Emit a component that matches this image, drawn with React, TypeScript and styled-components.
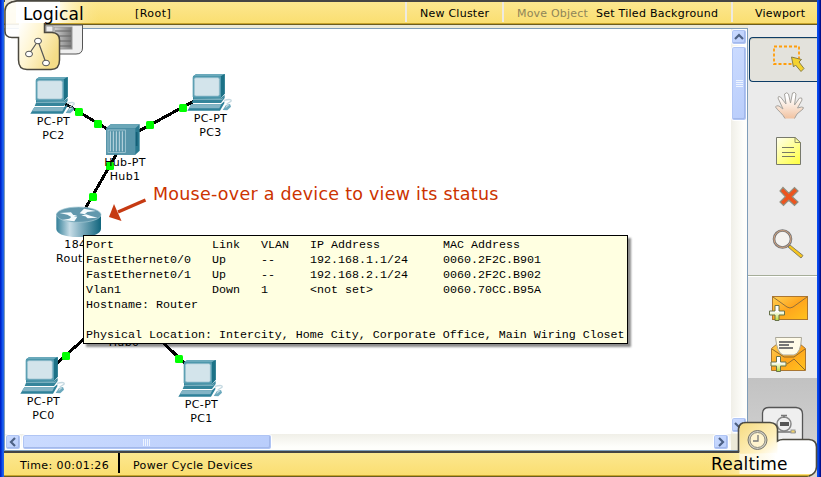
import React from 'react';
import styled, { createGlobalStyle } from 'styled-components';

const GlobalStyle = createGlobalStyle`
  * { box-sizing: border-box; }
  body { margin: 0; overflow: hidden; font-family: "DejaVu Sans", sans-serif; font-size: 11px; color: #000; }
  svg { display: block; }
`;

const Window = styled.div`
  position: relative;
  width: 821px;
  height: 477px;
  display: flex;
  flex-direction: column;
  padding: 0 4px;
  background: linear-gradient(90deg, #0022c8 0, #0022c8 1px, #0a4ff0 2px, #2a66e0 4px, #ece9d8 4px, #ece9d8 817px, #0a4ff0 817px, #0038e0 819px, #00108c 820px);
`;

const Bar = styled.div<{ $bottom?: boolean }>`
  display: flex;
  flex: none;
  align-items: stretch;
  height: ${p => (p.$bottom ? 26 : 25)}px;
  border-top: 2px solid #444;
  border-bottom: 1px solid #6b5d22;
  background: linear-gradient(#fce78f, #fade70);
  box-shadow: inset 0 -1px 0 #c8a42c;
  line-height: ${p => (p.$bottom ? 25 : 23)}px;
  white-space: nowrap;
`;

const BarCell = styled.div<{ $width: number; $pad: number; $dark?: boolean; $last?: boolean }>`
  display: flex;
  width: ${p => p.$width}px;
  height: 20px;
  flex: none;
  padding-left: ${p => p.$pad}px;
  border-right: ${p => (p.$last ? '0' : p.$dark ? '2px solid #000' : '2px solid #eeeae0')};
`;

const BarText = styled.span<{ $width?: number; $muted?: boolean; $spacing?: number }>`
  width: ${p => (p.$width ? `${p.$width}px` : 'auto')};
  color: ${p => (p.$muted ? '#8f8558' : '#000')};
  letter-spacing: ${p => p.$spacing ?? 0}px;
`;

const Middle = styled.div`
  display: flex;
  flex: none;
  height: 426px;
`;

const Workspace = styled.div`
  display: grid;
  grid-template-columns: 726px 16px;
  grid-template-rows: 405px 16px;
  width: 744px;
  flex: none;
  border: 1px solid #7f9db9;
  border-top: 0;
  margin-top: 3px;
  box-shadow: inset 0 1px 0 #7f9db9;
  padding-top: 1px;
`;

const Canvas = styled.div`
  position: relative;
  overflow: hidden;
  background: #fff;
`;

const Links = styled.svg`
  position: absolute;
  left: 0;
  top: 0;
`;

const Node = styled.div<{ $x: number; $y: number; $width: number }>`
  position: absolute;
  left: ${p => p.$x - 5}px;
  top: ${p => p.$y - 29}px;
  width: ${p => p.$width}px;
  display: flex;
  flex-direction: column;
  align-items: center;
`;

const NodeLabel = styled.span`
  font-size: 11px;
  line-height: 14px;
  letter-spacing: 0.35px;
  white-space: nowrap;

  svg + & {
    margin-top: 1px;
  }
`;

const Callout = styled.div`
  position: absolute;
  left: 148px;
  top: 153px;
  color: #cc3300;
  font-size: 17.5px;
  letter-spacing: 0.24px;
  line-height: 24px;
  white-space: nowrap;
`;

const Tooltip = styled.div`
  position: absolute;
  left: 78px;
  top: 206px;
  width: 545px;
  height: 109px;
  padding: 2px 0 0 2px;
  border: 1px solid #000;
  background: #ffffe1;
  box-shadow: 3px 3px 2px rgba(0, 0, 0, 0.45);
  font-family: "Liberation Mono", monospace;
  font-size: 11.667px;
  line-height: 15px;
  white-space: pre;
`;

const StatusRow = styled.div`
  display: grid;
  grid-template-columns: 126px 49px 49px 133px 1fr;
  height: 15px;
`;

const StatusLine = styled.div`
  height: 15px;
`;

const Track = styled.div<{ $vertical?: boolean }>`
  display: flex;
  flex-direction: ${p => (p.$vertical ? 'column' : 'row')};
  background: linear-gradient(${p => (p.$vertical ? '90deg' : '180deg')}, #f0efe8, #fefefb 80%);
`;

const ScrollPiece = styled.div<{ $w: number; $h: number }>`
  display: flex;
  flex: none;
  align-items: center;
  justify-content: center;
  width: ${p => p.$w}px;
  height: ${p => p.$h}px;
  border: 1px solid #fff;
  border-radius: 3px;
  background: linear-gradient(135deg, #cbdbff, #b9cdfb);
  box-shadow: inset 0 0 0 1px #b0c5f4, inset -1px -1px 0 1px #a3b8ea;
`;

const Gap = styled.div<{ $size: number }>`
  flex: 0 0 ${p => p.$size}px;
`;

const Corner = styled.div`
  background: #ece9d8;
`;

const Side = styled.div`
  width: 69px;
  background: #ebebeb;
  display: flex;
  flex-direction: column;
  padding-top: 12px;
`;

const ToolButton = styled.div<{ $height: number; $active?: boolean }>`
  flex: none;
  height: ${p => p.$height}px;
  padding-left: ${p => (p.$active ? 16 : 18)}px;
  margin-left: ${p => (p.$active ? 1 : 0)}px;
  ${p => p.$active && `
    border: 1px solid #0d3c66;
    border-right: 0;
    border-radius: 4px 0 0 4px;
    background: #e3e2dc;
    box-shadow: inset 0 1px 0 #c5c5bc;
  `}
`;

const ToolGroup = styled.div`
  height: 103px;
  flex: none;
  border-top: 1px solid #a5ad99;
  box-shadow: inset 0 1px 0 #fff;
  padding-top: 10px;
`;

const SideFoot = styled.div`
  flex: 1;
  background: linear-gradient(#c2c2c2, #d2d2d2);
`;

const Overlay = styled.svg<{ $x: number; $y: number }>`
  position: absolute;
  left: ${p => p.$x}px;
  top: ${p => p.$y}px;
`;

const TabTitle = styled.div<{ $x: number; $y: number }>`
  position: absolute;
  left: ${p => p.$x}px;
  top: ${p => p.$y}px;
  font-size: 17px;
  letter-spacing: 0.2px;
  line-height: 20px;
  white-space: nowrap;
`;

const PcIcon = () => (
  <svg width="47" height="37" viewBox="0 0 141 111">
    <path d="M18 7 28 0H113V59L100 73 18 75Z" fill="#277e94" />
    <path d="M18 7 28 0H113L102 7Z" fill="#6aa9bb" />
    <path d="M102 7 113 0V59L102 71Z" fill="#1c7287" />
    <rect x="17" y="7" width="85" height="64" rx="4" fill="#579db1" />
    <rect x="22" y="11" width="75" height="55" rx="5" fill="#d3e4eb" stroke="#92bdcb" strokeWidth="2" />
    <path d="M20 73H101L113 63V72L102 87H14Z" fill="#35859b" />
    <path d="M20 74H104L111 69 105 78H18Z" fill="#79afbf" />
    <path d="M13 91H102L112 82V88L99 110H1Z" fill="#2f829a" />
    <path d="M13 91H103L97 103H5Z" fill="#83b4c5" />
    <path d="M111 79Q136 73 132 82L119 90" fill="none" stroke="#c5d9e1" strokeWidth="4" />
    <path d="M117 93 129 90 132 98 121 109 107 108Z" fill="#6ba9bd" />
    <path d="M118 94 128 92 115 103Z" fill="#bdd7e0" />
  </svg>
);

const HubIcon = () => (
  <svg width="40" height="31" viewBox="315 192 120 93">
    <path d="M318 205 332 193H419V272L406 284H318Z" fill="#29798f" />
    <path d="M318 205 332 193H419L406 205Z" fill="#6ba7b8" />
    <rect x="318" y="205" width="88" height="79" fill="#5795aa" />
    <rect x="324" y="210" width="52" height="67" fill="none" stroke="#b8d6df" strokeWidth="2" />
    <path d="M331 214V274M340 214V274M349 214V274M358 214V274M367 214V274" stroke="#c2dae2" strokeWidth="3" />
    <path d="M410 216V258" stroke="#155f76" strokeWidth="5" />
  </svg>
);

const RouterIcon = () => (
  <svg width="46" height="31" viewBox="167 438 138 93">
    <defs>
      <linearGradient id="router"><stop offset="0" stopColor="#337f98" /><stop offset=".3" stopColor="#c7dde7" /><stop offset=".5" stopColor="#8fb8c8" /><stop offset="1" stopColor="#11657d" /></linearGradient>
    </defs>
    <path d="M168 462V507C168 540 302 540 302 507V462Z" fill="url(#router)" />
    <ellipse cx="235" cy="464" rx="67" ry="23" fill="#6298ad" stroke="#a7cbd6" strokeWidth="2" />
    <path d="M178 459 212 457 219 465 231 466 213 471 201 464Z M238 460 251 446 287 453 261 456 253 463Z M292 473 262 475 255 469 243 467 257 463 272 468Z M231 470 222 484 185 480 207 476 216 468Z" fill="#f5fbfd" />
  </svg>
);

const links = [
  [64, 103, 109, 130], [194, 101, 139, 131], [117, 153, 85, 209], [56, 364, 122, 305], [187, 365, 122, 305],
];
const lights = [[79, 112], [98, 124], [183, 108], [150, 125], [110, 166], [93, 197], [66, 356], [179, 359]];

const pcs = [
  { x: 30, y: 77, name: 'PC2' },
  { x: 187, y: 74, name: 'PC3' },
  { x: 20, y: 357, name: 'PC0' },
  { x: 178, y: 360, name: 'PC1' },
];

const ports = [
  ['Port', 'Link', 'VLAN', 'IP Address', 'MAC Address'],
  ['FastEthernet0/0', 'Up', '--', '192.168.1.1/24', '0060.2F2C.B901'],
  ['FastEthernet0/1', 'Up', '--', '192.168.2.1/24', '0060.2F2C.B902'],
  ['Vlan1', 'Down', '1', '<not set>', '0060.70CC.B95A'],
];

const Topology = () => (
  <Canvas>
    <Links width="726" height="405" viewBox="5 29 726 405">
      {links.map(([a, b, c, d]) => <line key={`${a}-${b}`} x1={a} y1={b} x2={c} y2={d} stroke="#000" strokeWidth="3" shapeRendering="crispEdges" />)}
      {lights.map(([x, y]) => <rect key={`${x}-${y}`} x={x - 4} y={y - 4} width="8" height="8" rx="1.5" fill="#00ff00" />)}
      <path d="M145.500 200 118 212" stroke="#c63a12" strokeWidth="3.4" />
      <path d="M109 217 114 204 121.500 221Z" fill="#c63a12" />
    </Links>
    {pcs.map(pc => (
      <Node key={pc.name} $x={pc.x} $y={pc.y} $width={47}>
        <PcIcon />
        <NodeLabel>PC-PT</NodeLabel>
        <NodeLabel>{pc.name}</NodeLabel>
      </Node>
    ))}
    <Node $x={105} $y={124} $width={40}>
      <HubIcon />
      <NodeLabel>Hub-PT</NodeLabel>
      <NodeLabel>Hub1</NodeLabel>
    </Node>
    <Node $x={56} $y={206} $width={46}>
      <RouterIcon />
      <NodeLabel>1841</NodeLabel>
      <NodeLabel>Router0</NodeLabel>
    </Node>
    <Node $x={104} $y={304} $width={40}>
      <HubIcon />
      <NodeLabel>Hub0</NodeLabel>
    </Node>
    <Callout>Mouse-over a device to view its status</Callout>
    <Tooltip>
      {ports.map(row => <StatusRow key={row[0]}>{row.map((cell, i) => <span key={i}>{cell}</span>)}</StatusRow>)}
      <StatusLine>Hostname: Router</StatusLine>
      <StatusLine />
      <StatusLine>Physical Location: Intercity, Home City, Corporate Office, Main Wiring Closet</StatusLine>
    </Tooltip>
  </Canvas>
);

const Chevron = ({ d }: { d: string }) => (
  <svg width="10" height="10" viewBox="0 0 10 10"><path d={d} fill="none" stroke="#4d6185" strokeWidth="2.2" /></svg>
);

const Plus = ({ x, y }: { x: number; y: number }) => (
  <path
    transform={`translate(${x} ${y})`}
    d="M-2-7.5H2V-2H7.5V2H2V7.5H-2V2H-7.5V-2H-2Z"
    fill="url(#plus)" stroke="#68734b" strokeWidth="1"
  />
);

const SelectIcon = () => (
  <svg width="46" height="42" viewBox="766 38 46 42">
    <rect x="774" y="46.500" width="25" height="17.500" fill="none" stroke="#ff9e0c" strokeWidth="1.8" strokeDasharray="3 2" />
    <path d="M791.500 57 801.500 59.500 799 62 804 68.500 801 71.500 795.500 65 793.500 67Z" fill="#f4d22d" stroke="#8a8047" />
  </svg>
);

const HandIcon = () => (
  <svg width="46" height="46" viewBox="766 82 46 46">
    <defs><linearGradient id="hand" x1="0" y1="0" x2="0" y2="1"><stop offset=".2" stopColor="#fff" /><stop offset="1" stopColor="#f1c2a0" /></linearGradient></defs>
    <path d="M785 118.500C783 114 778 111 775.500 107Q776 105 779 106L783 109 778 98Q778 95.500 780.500 97L786 104 784.500 94Q787 91.500 788.500 94L790.500 103 792.500 93Q795 91.500 796 94L794.500 105 799.500 98Q802.500 97 802 100L797.500 108 801.500 107Q804.500 107 803 109L797 114 794.500 118.500" fill="url(#hand)" stroke="#a6a39e" />
  </svg>
);

const NoteIcon = () => (
  <svg width="46" height="46" viewBox="766 128 46 46">
    <defs><linearGradient id="note" x1="0" y1="0" x2=".8" y2="1"><stop stopColor="#fffff0" /><stop offset="1" stopColor="#ffff4a" /></linearGradient></defs>
    <path d="M776.500 137.500H795L800.500 142.500V164.500H776.500Z" fill="url(#note)" stroke="#77796c" />
    <path d="M795 137.500V142.500H800.500Z" fill="#ffff9c" stroke="#8b8b65" />
    <path d="M782 147.500H794M782 152.500H795M782 156.500H795" stroke="#777965" />
  </svg>
);

const DeleteIcon = () => (
  <svg width="46" height="46" viewBox="766 174 46 46">
    <path d="M783 187.500 788.800 193.200 794.500 187.500 798 191 792.200 196.700 798 202 794.500 205.500 788.800 200.200 783.500 205.500 780 202 785.300 196.700 780 191Z" fill="#ed541e" stroke="#929080" strokeWidth="1.2" />
  </svg>
);

const InspectIcon = () => (
  <svg width="46" height="46" viewBox="766 220 46 46">
    <path d="M790 245 803 255.500 801 258 788 247Z" fill="#f6c51c" stroke="#8a8160" />
    <circle cx="782.500" cy="239" r="8.500" fill="#f4f2ef" stroke="#777" strokeWidth="2.6" />
    <circle cx="782.500" cy="239" r="8.500" fill="none" stroke="#d2a17d" strokeWidth="1" />
  </svg>
);

const EnvelopeDefs = () => (
  <defs>
    <linearGradient id="mail" x1="0" y1="0" x2="1" y2="1"><stop stopColor="#ffd052" /><stop offset=".5" stopColor="#ffa51d" /><stop offset="1" stopColor="#ffc31d" /></linearGradient>
    <linearGradient id="plus" x1="0" y1="0" x2="0" y2="1"><stop offset=".4" stopColor="#fff" /><stop offset="1" stopColor="#b6d935" /></linearGradient>
  </defs>
);

const MailIcon = () => (
  <svg width="46" height="46" viewBox="766 286 46 46">
    <EnvelopeDefs />
    <rect x="772.500" y="296.500" width="35" height="23" fill="url(#mail)" stroke="#ac7630" />
    <path d="M773 297 787 307Q790 309 793 307L807 297" fill="none" stroke="#92713b" />
    <Plus x={777} y={313} />
  </svg>
);

const OpenMailIcon = () => (
  <svg width="46" height="46" viewBox="766 332 46 46">
    <path d="M771.500 348.500 777 344H800L805.500 348.500V370.500H771.500Z" fill="url(#mail)" stroke="#a97632" />
    <path d="M775.500 337.500H801.500Q801 353 794 355H783Q777 353 775.500 337.500Z" fill="#fffbe9" stroke="#aaa798" />
    <path d="M779 342H794M779 345H789M779 348H793" stroke="#777" strokeWidth="1.8" />
    <path d="M772 349 784 357H794L805 349M787 364 794 359 805 370" fill="none" stroke="#946a29" />
    <Plus x={778.500} y={364} />
  </svg>
);

const LogicalTab = () => (
  <Overlay $x={4} $y={0} width="100" height="72" viewBox="4 0 100 72">
    <defs>
      <linearGradient id="tabfade"><stop offset=".45" stopColor="#fff" /><stop offset="1" stopColor="#fbe68f" stopOpacity="0" /></linearGradient>
      <linearGradient id="tabbody" x1="0" y1="0" x2="1" y2=".5"><stop stopColor="#fff" /><stop offset=".45" stopColor="#fff5d1" /><stop offset="1" stopColor="#f4dc87" /></linearGradient>
      <linearGradient id="rack"><stop stopColor="#d2d2d2" /><stop offset="1" stopColor="#777" /></linearGradient>
    </defs>
    <path d="M45 25H82.500V48Q82.500 54 76 54H56L45 35Z" fill="#efefef" stroke="#555" />
    <path d="M46 26H53V32H46Z" fill="#eee" stroke="#999" />
    <rect x="54" y="27" width="18" height="22" fill="url(#rack)" stroke="#999" />
    <path d="M55 31H71M55 36H71M55 41H71M55 46H71" stroke="#646464" />
    <rect x="16" y="2" width="84" height="21" fill="url(#tabfade)" />
    <path d="M16 1Q5 2 5 11V31Q5 37 11 37.500H19L44 33V22L60 10V1Z" fill="#fff" opacity=".9" />
    <path d="M5 0H17Q5 2 5 11Z" fill="#e8e4d8" />
    <path d="M18.500 38V60Q18.500 69.500 27 69.500H51Q59.500 69.500 59.500 60V40Q59.500 33 52 32.500H44.500V23H19Z" fill="url(#tabbody)" />
    <path d="M84 1H17Q5 2 5 11V31Q5 37.500 12 37.500H18.500V60Q18.500 69.500 27 69.500H51Q59.500 69.500 59.500 60V40Q59.500 33 52 32.500H44.500V23" fill="none" stroke="#4b483f" strokeWidth="1.5" />
    <path d="M38 41 29 54M38 41 46 63" stroke="#555" strokeWidth="1.2" />
    <g fill="#fff" stroke="#555"><ellipse cx="38" cy="41" rx="3.500" ry="2.800" /><ellipse cx="29" cy="54" rx="3.500" ry="2.800" /><ellipse cx="46" cy="63" rx="3.500" ry="2.800" /></g>
  </Overlay>
);

const RealtimeTab = () => (
  <Overlay $x={690} $y={404} width="128" height="73" viewBox="690 404 128 73">
    <defs>
      <linearGradient id="realfade" gradientUnits="userSpaceOnUse" x1="700" x2="776" y1="455" y2="455"><stop stopColor="#f9df76" stopOpacity="0" /><stop offset="1" stopColor="#fff" /></linearGradient>
      <linearGradient id="realbody" x1="0" y1="0" x2="1" y2="1"><stop stopColor="#f5da80" /><stop offset=".65" stopColor="#fff0bd" /><stop offset="1" stopColor="#fff" /></linearGradient>
    </defs>
    <path d="M762.500 443V413Q763 407.500 769 407.500H796Q802.500 408 802.500 414V443Z" fill="#efefef" stroke="#555" strokeWidth="1.3" />
    <circle cx="784" cy="424" r="7" fill="#eee" stroke="#888" strokeWidth="1.5" />
    <rect x="780" y="422" width="9" height="4" fill="#555" />
    <path d="M781 415.500H787M784 415V418M775 432H796" stroke="#777" strokeWidth="1.5" />
    <rect x="791" y="430" width="4" height="3" fill="#efd169" stroke="#999" />
    <path d="M739.500 454V429Q740 422.500 746 422.500H770Q777 423 777.500 429V440H809Q816 440 816 447V468Q816 474 811 474H739.500Z" fill="#fff" />
    <path d="M739.500 454V429Q740 422.500 746 422.500H770Q777 423 777.500 429V454Z" fill="url(#realbody)" />
    <rect x="700" y="453" width="76" height="21" fill="url(#realfade)" />
    <path d="M817 464V477H807Q816 476 816 466Z" fill="#dbd8ce" />
    <path d="M738.500 452V429Q739 422.500 746 422.500H770Q777 423 777.500 429V441Q780 439.500 783 439.500H809Q816.500 440 816.500 447V467Q816 474 809 476" fill="none" stroke="#4c4a41" strokeWidth="1.6" />
    <circle cx="757.500" cy="440" r="9.500" fill="#d0cec3" stroke="#77766c" />
    <circle cx="757.500" cy="440" r="7.500" fill="#fff4ce" stroke="#8e8c7f" />
    <path d="M758 435V441H753" fill="none" stroke="#777" strokeWidth="1.3" />
  </Overlay>
);

export default function App() {
  return (
    <>
      <GlobalStyle />
      <Window>
        <Bar>
          <BarCell $width={403} $pad={131}><BarText $spacing={0.45}>[Root]</BarText></BarCell>
          <BarCell $width={97} $pad={13}><BarText $spacing={0.24}>New Cluster</BarText></BarCell>
          <BarCell $width={229} $pad={13}>
            <BarText $width={79} $spacing={0.2} $muted>Move Object</BarText>
            <BarText $spacing={0.26}>Set Tiled Background</BarText>
          </BarCell>
          <BarCell $width={84} $pad={22} $last><BarText $spacing={0.2}>Viewport</BarText></BarCell>
        </Bar>
        <Middle>
          <Workspace>
            <Topology />
            <Track $vertical>
              <ScrollPiece $w={16} $h={16}><Chevron d="M1 7 5 3 9 7" /></ScrollPiece>
              <Gap $size={1} />
              <ScrollPiece $w={16} $h={75}>
                <svg width="7" height="8" viewBox="0 0 7 8"><path d="M0 .5H7M0 2.500H7M0 4.500H7M0 6.500H7" stroke="#edf4ff" /></svg>
              </ScrollPiece>
              <Gap $size={296} />
              <ScrollPiece $w={16} $h={16}><Chevron d="M1 3 5 7 9 3" /></ScrollPiece>
            </Track>
            <Track>
              <ScrollPiece $w={16} $h={16}><Chevron d="M7 1 3 5 7 9" /></ScrollPiece>
              <Gap $size={1} />
              <ScrollPiece $w={250} $h={16}>
                <svg width="8" height="7" viewBox="0 0 8 7"><path d="M.5 0V7M2.500 0V7M4.500 0V7M6.500 0V7" stroke="#edf4ff" /></svg>
              </ScrollPiece>
              <Gap $size={441} />
              <ScrollPiece $w={16} $h={16}><Chevron d="M3 1 7 5 3 9" /></ScrollPiece>
            </Track>
            <Corner />
          </Workspace>
          <Side>
            <ToolButton $height={45} $active><SelectIcon /></ToolButton>
            <ToolButton $height={46}><HandIcon /></ToolButton>
            <ToolButton $height={46}><NoteIcon /></ToolButton>
            <ToolButton $height={46}><DeleteIcon /></ToolButton>
            <ToolButton $height={55}><InspectIcon /></ToolButton>
            <ToolGroup>
              <ToolButton $height={46}><MailIcon /></ToolButton>
              <ToolButton $height={46}><OpenMailIcon /></ToolButton>
            </ToolGroup>
            <SideFoot />
          </Side>
        </Middle>
        <Bar $bottom>
          <BarCell $width={116} $pad={16} $dark><BarText $spacing={0.4}>Time: 00:01:26</BarText></BarCell>
          <BarCell $width={400} $pad={13} $last><BarText $spacing={0.33}>Power Cycle Devices</BarText></BarCell>
        </Bar>
        <LogicalTab />
        <TabTitle $x={23} $y={4}>Logical</TabTitle>
        <RealtimeTab />
        <TabTitle $x={711} $y={454}>Realtime</TabTitle>
      </Window>
    </>
  );
}
